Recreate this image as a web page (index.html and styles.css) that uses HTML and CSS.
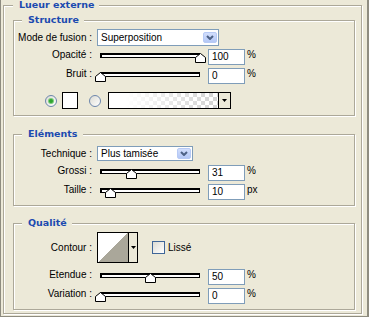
FILE: index.html
```html
<!DOCTYPE html>
<html lang="fr">
<head>
<meta charset="utf-8">
<title>Lueur externe</title>
<link rel="stylesheet" href="styles.css">
</head>
<body>
<div class="window">
  <div class="group outer">
    <div class="gtitle">Lueur externe</div>

    <div class="group sub g-structure">
      <div class="gtitle">Structure</div>
      <div class="row r-mode">
        <span class="label">Mode de fusion :</span>
        <div class="select sel-mode">
          <span class="sel-text">Superposition</span>
          <span class="sel-btn"><svg width="8" height="5" viewBox="0 0 8 5"><polyline points="1,1 4,4 7,1" fill="none" stroke="#4D6185" stroke-width="2"/></svg></span>
        </div>
      </div>
      <div class="row r-slider r-first">
        <span class="label">Opacité :</span>
        <div class="slider"><div class="track"></div><svg class="thumb" style="left:calc(100% - 5px)" width="11" height="10" viewBox="0 0 11 10"><polygon points="5.5,0.5 10.5,4.5 10.5,9.5 0.5,9.5 0.5,4.5" fill="#fff" stroke="#000"/></svg></div>
        <div class="num">100</div>
        <span class="unit">%</span>
      </div>
      <div class="row r-slider">
        <span class="label">Bruit :</span>
        <div class="slider"><div class="track"></div><svg class="thumb" style="left:calc(0% - 5px)" width="11" height="10" viewBox="0 0 11 10"><polygon points="5.5,0.5 10.5,4.5 10.5,9.5 0.5,9.5 0.5,4.5" fill="#fff" stroke="#000"/></svg></div>
        <div class="num">0</div>
        <span class="unit">%</span>
      </div>
      <div class="row r-radio">
        <span class="radio checked"></span>
        <span class="swatch"></span>
        <span class="radio"></span>
        <div class="grad">
          <span class="grad-fill"></span>
          <span class="drop-arrow"><svg width="5" height="3" viewBox="0 0 5 3"><polygon points="0,0 5,0 2.5,3" fill="#000"/></svg></span>
        </div>
      </div>
    </div>

    <div class="group sub g-elements">
      <div class="gtitle">Eléments</div>
      <div class="row r-tech">
        <span class="label">Technique :</span>
        <div class="select sel-tech">
          <span class="sel-text">Plus tamisée</span>
          <span class="sel-btn"><svg width="8" height="5" viewBox="0 0 8 5"><polyline points="1,1 4,4 7,1" fill="none" stroke="#4D6185" stroke-width="2"/></svg></span>
        </div>
      </div>
      <div class="row r-slider r-first2">
        <span class="label">Grossi :</span>
        <div class="slider"><div class="track"></div><svg class="thumb" style="left:calc(31% - 5px)" width="11" height="10" viewBox="0 0 11 10"><polygon points="5.5,0.5 10.5,4.5 10.5,9.5 0.5,9.5 0.5,4.5" fill="#fff" stroke="#000"/></svg></div>
        <div class="num">31</div>
        <span class="unit">%</span>
      </div>
      <div class="row r-slider">
        <span class="label">Taille :</span>
        <div class="slider"><div class="track"></div><svg class="thumb" style="left:calc(10% - 5px)" width="11" height="10" viewBox="0 0 11 10"><polygon points="5.5,0.5 10.5,4.5 10.5,9.5 0.5,9.5 0.5,4.5" fill="#fff" stroke="#000"/></svg></div>
        <div class="num">10</div>
        <span class="unit">px</span>
      </div>
    </div>

    <div class="group sub g-qualite">
      <div class="gtitle">Qualité</div>
      <div class="row r-contour">
        <span class="label">Contour :</span>
        <div class="contour">
          <span class="c-prev"></span>
          <span class="drop-arrow"><svg width="5" height="3" viewBox="0 0 5 3"><polygon points="0,0 5,0 2.5,3" fill="#000"/></svg></span>
        </div>
        <span class="checkbox"></span>
        <span class="check-label">Lissé</span>
      </div>
      <div class="row r-slider r-first3">
        <span class="label">Etendue :</span>
        <div class="slider"><div class="track"></div><svg class="thumb" style="left:calc(50% - 5px)" width="11" height="10" viewBox="0 0 11 10"><polygon points="5.5,0.5 10.5,4.5 10.5,9.5 0.5,9.5 0.5,4.5" fill="#fff" stroke="#000"/></svg></div>
        <div class="num">50</div>
        <span class="unit">%</span>
      </div>
      <div class="row r-slider">
        <span class="label">Variation :</span>
        <div class="slider"><div class="track"></div><svg class="thumb" style="left:calc(0% - 5px)" width="11" height="10" viewBox="0 0 11 10"><polygon points="5.5,0.5 10.5,4.5 10.5,9.5 0.5,9.5 0.5,4.5" fill="#fff" stroke="#000"/></svg></div>
        <div class="num">0</div>
        <span class="unit">%</span>
      </div>
    </div>
  </div>
</div>
</body>
</html>
```

FILE: styles.css
```css
* { box-sizing: border-box; }
html, body { margin: 0; padding: 0; }
body {
  background: #ECE9D8;
  font-family: "Liberation Sans", Arial, sans-serif;
  font-size: 10px;
  color: #000;
}
.window {
  width: 369px;
  height: 317px;
  border-left: 1px solid #8E8C80;
  border-right: 2px solid #8E8C80;
  border-bottom: 1px solid #8E8C80;
  padding: 5px 0 0 2px;
}
.group {
  border: 1px solid #ACA899;
  box-shadow: inset 1px 1px 0 #fff, 1px 1px 0 #fff;
}
.outer { width: 359px; height: 309px; }
.gtitle {
  margin: -7px 0 0 8px;
  padding: 0 5px 0 6px;
  width: max-content;
  height: 12px;
  line-height: 12px;
  background: #ECE9D8;
  font-family: "DejaVu Sans", Verdana, sans-serif;
  font-weight: bold;
  font-size: 9.5px;
  color: #1B4AB0;
}
.outer > .gtitle { margin-left: 9px; }
.sub { width: 342px; margin-left: 9px; }
.g-structure { height: 96px; margin-top: 9px; }
.g-elements { height: 72px; margin-top: 18px; }
.g-qualite { height: 87px; margin-top: 17px; }

.row { display: flex; align-items: flex-start; }
.label {
  flex: none;
  width: 78px;
  margin-right: 5px;
  text-align: right;
  white-space: nowrap;
}

/* selects */
.r-mode { margin-top: 3px; height: 17px; }
.r-mode .label { line-height: 17px; }
.r-tech { margin-top: 6px; height: 15px; }
.r-tech .label { line-height: 15px; }
.select {
  display: flex;
  align-items: center;
  height: 100%;
  border: 1px solid #7F9DB9;
  background: #fff;
}
.sel-mode { width: 122px; }
.sel-tech { width: 96px; }
.sel-text { flex: 1; padding-left: 3px; white-space: nowrap; }
.sel-btn {
  flex: none;
  width: 14px;
  height: 11px;
  margin-right: 1px;
  display: flex;
  align-items: center;
  justify-content: center;
  background: linear-gradient(#D2DEFC, #B4C8F6);
  border: 1px solid #B7CAF5;
  border-radius: 2px;
}
.sel-btn svg { display: block; }

/* sliders */
.r-slider { height: 16px; margin-top: 3px; }
.r-first2 { margin-top: 4px; }
.r-first3 { margin-top: 6px; }
.r-slider .label { line-height: 12px; }
.slider {
  position: relative;
  flex: none;
  width: 100px;
  height: 16px;
  margin-left: 3px;
  margin-right: 8px;
}
.track {
  margin-top: 4px;
  height: 5px;
  border: 1px solid #000;
  border-top-width: 2px;
  border-left-width: 2px;
  background: #fff;
}
.thumb { position: absolute; top: 4px; display: block; }
.num {
  flex: none;
  width: 37px;
  height: 16px;
  border: 1px solid #7F9DB9;
  background: #fff;
  padding-left: 3px;
  line-height: 14px;
}
.unit { margin-left: 2px; line-height: 12px; }

/* radio row */
.r-radio {
  margin-top: 8px;
  height: 17px;
  align-items: center;
  padding-left: 31px;
}
.radio {
  flex: none;
  width: 12px;
  height: 12px;
  border-radius: 50%;
  border: 1px solid #6C86AC;
  background: linear-gradient(135deg, #DCDBD3, #FFFFFF);
  display: flex;
  align-items: center;
  justify-content: center;
}
.radio.checked::after {
  content: "";
  width: 4px;
  height: 4px;
  border-radius: 50%;
  background: #2FA530;
  box-shadow: 0 0 0 1px #7CCB7C;
}
.swatch {
  flex: none;
  width: 16px;
  height: 17px;
  border: 1px solid #000;
  background: #fff;
  margin: 0 11px 0 5px;
}
.grad {
  flex: none;
  display: flex;
  width: 123px;
  height: 17px;
  margin-left: 7px;
  border: 1px solid #000;
}
.grad-fill {
  flex: 1;
  background:
    linear-gradient(to right, #fff 15%, rgba(255,255,255,0) 95%),
    repeating-conic-gradient(#D4D4D4 0 25%, #fff 0 50%) 0 0 / 8px 8px;
}
.drop-arrow {
  flex: none;
  width: 12px;
  border-left: 1px solid #000;
  background: #ECE9D8;
  display: flex;
  align-items: center;
  justify-content: center;
}
.drop-arrow svg { display: block; }

/* contour */
.r-contour { margin-top: 3px; height: 31px; align-items: center; }
.r-contour .label { line-height: 31px; }
.contour {
  flex: none;
  display: flex;
  width: 41px;
  height: 31px;
  border: 1px solid #000;
}
.c-prev {
  width: 30px;
  background: linear-gradient(to top left, #AAA79A 50%, #fff 50%);
}
.contour .drop-arrow { width: 9px; }
.checkbox {
  flex: none;
  width: 13px;
  height: 13px;
  margin-left: 14px;
  border: 1px solid #3F6698;
  background: linear-gradient(135deg, #DCDBD3, #FFFFFF);
}
.check-label { margin-left: 3px; }
```
